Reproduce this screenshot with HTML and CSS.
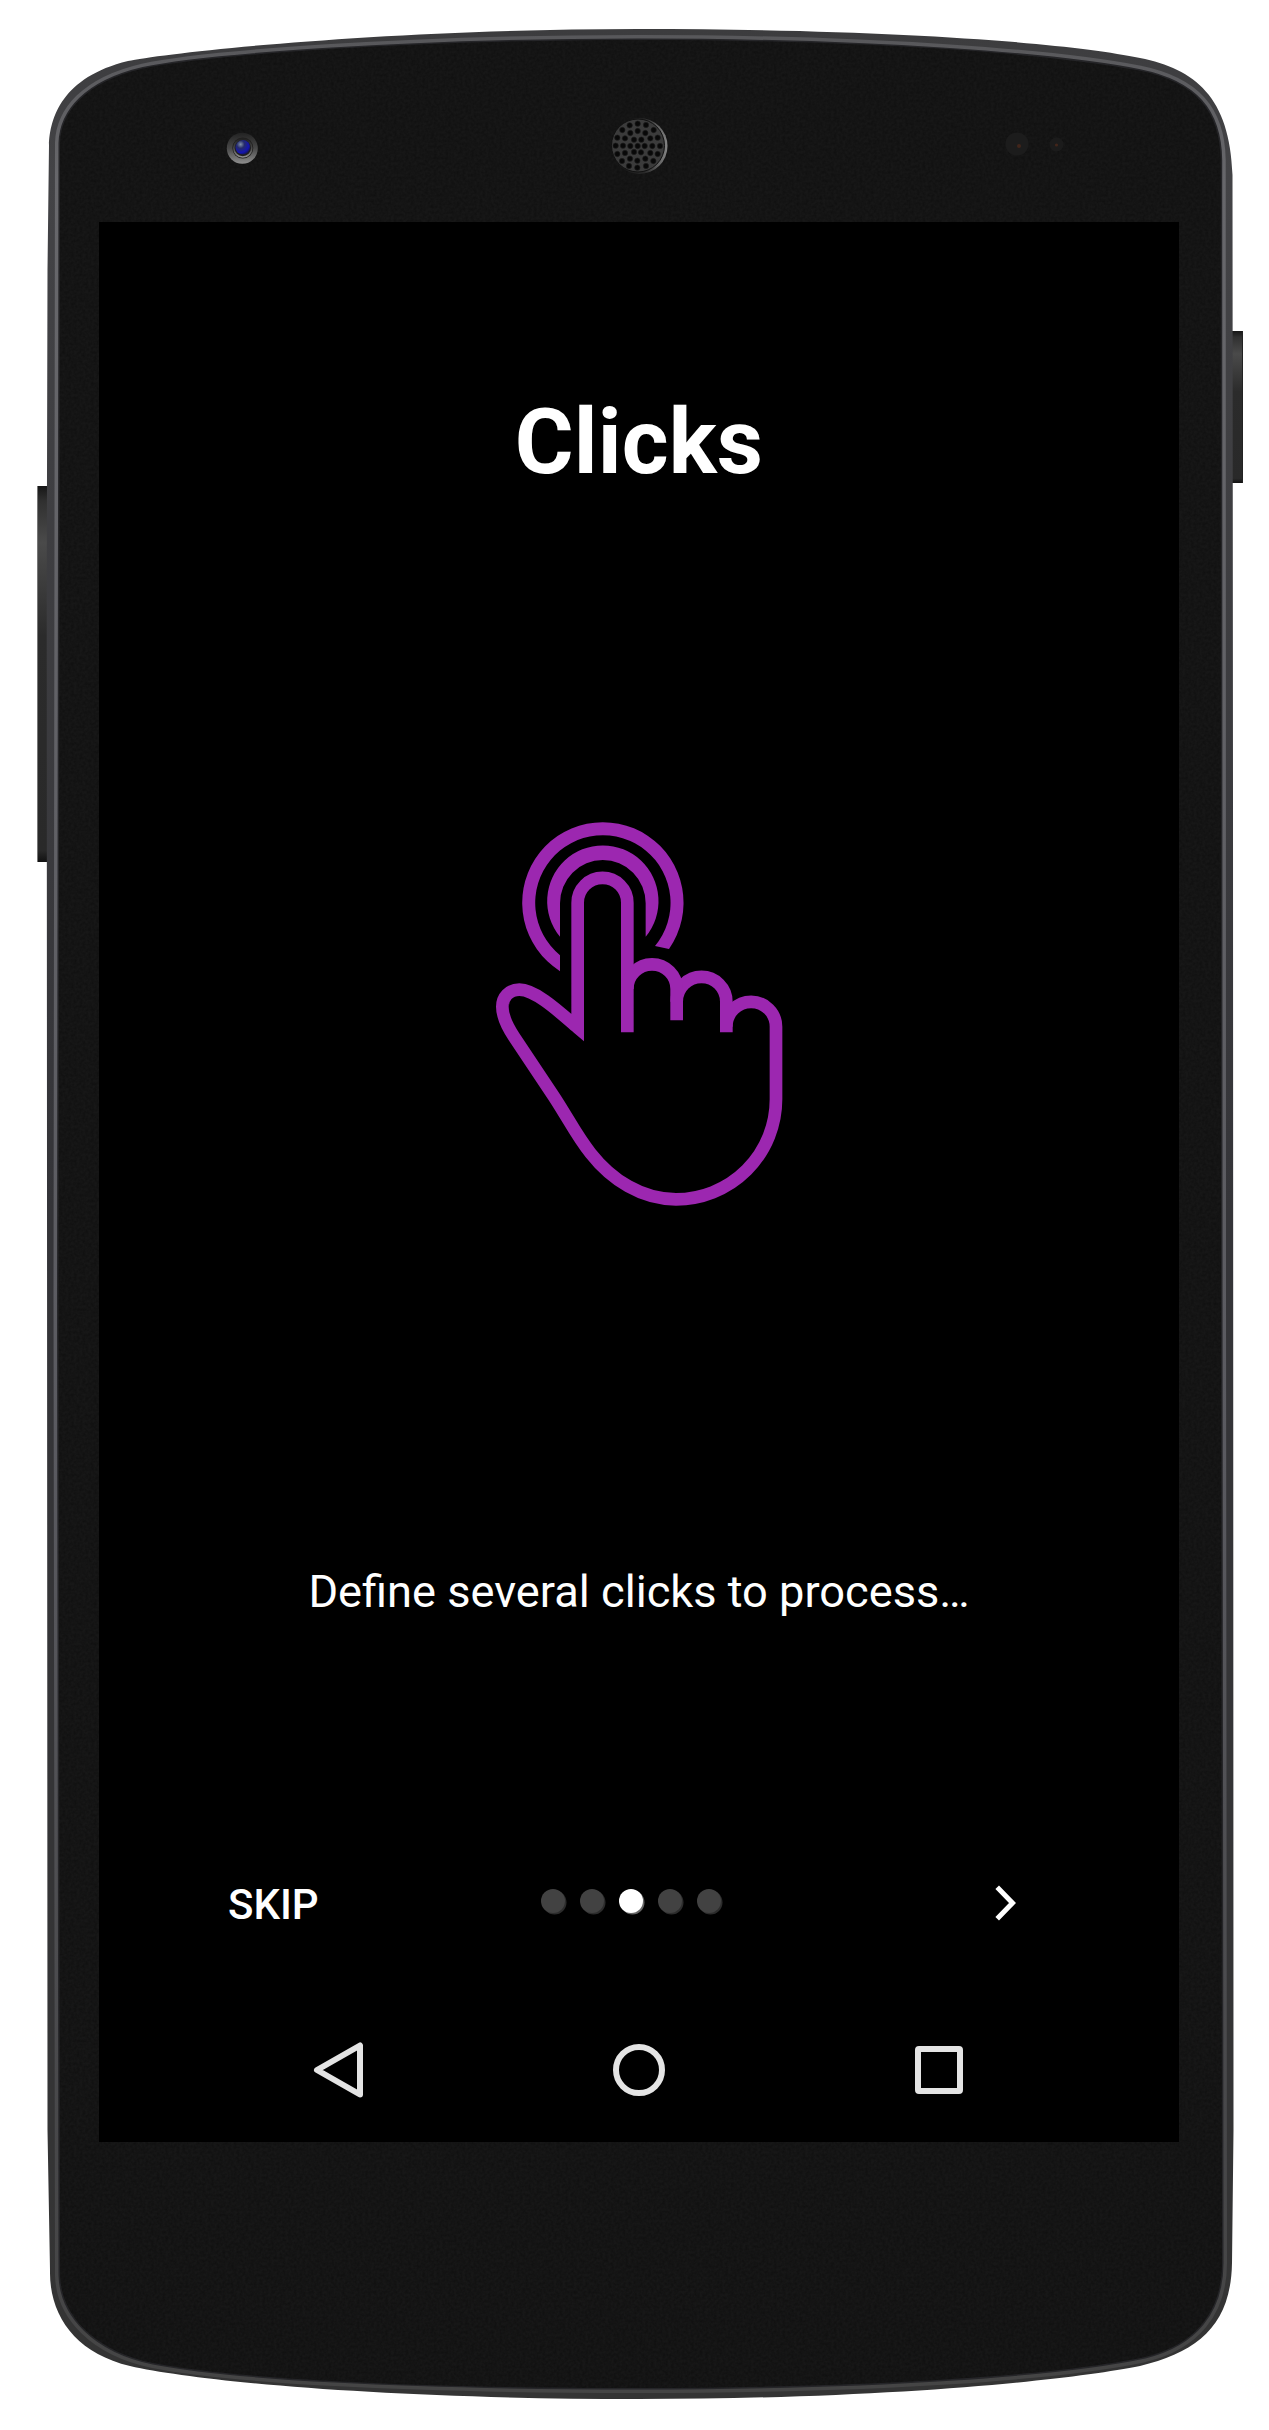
FILE: index.html
```html
<!DOCTYPE html>
<html lang="en">
<head>
<meta charset="utf-8">
<title>Clicks</title>
<link rel="stylesheet" href="styles.css">
</head>
<body>
<div class="phone">
  <svg class="shell" viewBox="0 0 1269 2430" aria-hidden="true">
    <defs>
      <linearGradient id="rim" x1="0" y1="0" x2="0" y2="1">
        <stop offset="0" stop-color="#3c3c3e"/><stop offset=".06" stop-color="#434346"/>
        <stop offset=".5" stop-color="#343438"/><stop offset="1" stop-color="#343434"/>
      </linearGradient>
      <linearGradient id="edge" x1="0" y1="0" x2="0" y2="1">
        <stop offset="0" stop-color="#58585b"/><stop offset=".06" stop-color="#67676b"/>
        <stop offset=".6" stop-color="#5a5a60"/><stop offset=".9" stop-color="#474749"/><stop offset="1" stop-color="#454545"/>
      </linearGradient>
      <linearGradient id="key" x1="0" y1="0" x2="0" y2="1">
        <stop offset="0" stop-color="#161616"/><stop offset=".04" stop-color="#303030"/><stop offset=".15" stop-color="#4a4a4a"/>
        <stop offset=".4" stop-color="#2b2b2b"/><stop offset=".97" stop-color="#292929"/><stop offset="1" stop-color="#111"/>
      </linearGradient>
      <linearGradient id="bezel" x1="0" y1="0" x2="0" y2="1">
        <stop offset="0" stop-color="#222"/><stop offset=".5" stop-color="#484848"/><stop offset="1" stop-color="#8e8e8e"/>
      </linearGradient>
      <linearGradient id="mesh" x1="0" y1="0" x2="1" y2="0">
        <stop offset="0" stop-color="#141414"/><stop offset=".6" stop-color="#2a2a2a"/><stop offset="1" stop-color="#858585"/>
      </linearGradient>
      <radialGradient id="lens" cx=".35" cy=".3" r=".75">
        <stop offset="0" stop-color="#8090a8"/><stop offset=".35" stop-color="#252b6b"/><stop offset=".75" stop-color="#1414b0"/><stop offset="1" stop-color="#15154a"/>
      </radialGradient>
      <filter id="grain" x="0" y="0" width="1" height="1">
        <feTurbulence type="fractalNoise" baseFrequency=".35" numOctaves="2" seed="4"/>
        <feColorMatrix values="0 0 0 0 0  0 0 0 0 0  0 0 0 0 0  .5 0 0 0 -.13"/>
        <feComposite in2="SourceGraphic" operator="in"/>
      </filter>
      <path id="face" d="M60 143C61 112 85 82 143 68.5C200 56 400 40 638 40C880 40 1060 55 1140 70.7C1195 82 1220 110 1220.7 160L1221 1300L1222 2263C1222 2312 1195 2345 1145 2357C1060 2375 880 2388 638 2388C400 2388 230 2378 153 2363C95 2351 61 2316 60 2275L58.5 1300Z"/>
    </defs>
    <rect x="37" y="486" width="13" height="376" fill="url(#key)"/>
    <path d="M37.5 486V862" stroke="#777"/>
    <rect x="1231" y="331" width="12" height="152" fill="url(#key)"/>
    <path d="M1242.5 331V483" stroke="#222"/>
    <path fill="url(#rim)" d="M49 145C50 118 62 77 128 61C165 53 380 29 638 29C890 29 1070 43 1140 58C1195 69 1230 97 1232.5 175L1233 800L1233.5 2130L1232 2263C1231 2325 1198 2352 1140 2366C1070 2380 890 2399 638 2399C390 2399 200 2382 130 2366C75 2353 49 2315 50 2270L47.5 2130L46.7 600L47.5 270Z"/>
    <use href="#face" fill="none" stroke="url(#edge)" stroke-width="10"/>
    <use href="#face" fill="none" stroke="#252528" stroke-width="3"/>
    <use href="#face" fill="#171717"/>
    <use href="#face" filter="url(#grain)"/>

    <circle cx="242.3" cy="148.3" r="15.5" fill="url(#bezel)"/>
    <circle cx="242.8" cy="148" r="10.5" fill="#201f1e"/>
    <circle cx="242.8" cy="148" r="9" fill="none" stroke="url(#bezel)" stroke-width="1.5"/>
    <circle cx="242.8" cy="147.3" r="7.3" fill="url(#lens)"/>

    <circle cx="639.5" cy="146" r="28" fill="url(#mesh)"/>
    <circle cx="638" cy="145.5" r="26.5" fill="#3b3b3b" stroke="#111" stroke-width="1"/>
    <g transform="translate(560 90) scale(.33333)" fill="#080808" stroke="#1c1c1c" stroke-width="2">
      <circle cx="233" cy="168" r="8"/>
      <circle cx="222" cy="149" r="8"/><circle cx="244" cy="149" r="8"/><circle cx="254" cy="168" r="8"/><circle cx="243" cy="187" r="8"/><circle cx="222" cy="186" r="8"/><circle cx="211" cy="168" r="8"/>
      <circle cx="271" cy="145" r="8"/><circle cx="256" cy="129" r="8"/><circle cx="233" cy="123" r="8"/><circle cx="211" cy="129" r="8"/><circle cx="195" cy="145" r="8"/><circle cx="189" cy="167" r="8"/><circle cx="277" cy="168" r="8"/><circle cx="271" cy="189" r="8"/><circle cx="256" cy="206" r="8"/><circle cx="232" cy="212" r="8"/><circle cx="210" cy="206" r="8"/><circle cx="195" cy="189" r="8"/>
      <circle cx="300" cy="168" r="8"/><circle cx="293" cy="192" r="8"/><circle cx="280" cy="213" r="8"/><circle cx="258" cy="228" r="8"/><circle cx="232" cy="233" r="8"/><circle cx="207" cy="228" r="8"/><circle cx="186" cy="213" r="8"/><circle cx="172" cy="192" r="8"/><circle cx="167" cy="167" r="8"/><circle cx="172" cy="143" r="8"/><circle cx="187" cy="120" r="8"/><circle cx="209" cy="106" r="8"/><circle cx="233" cy="101" r="8"/><circle cx="258" cy="105" r="8"/><circle cx="281" cy="120" r="8"/><circle cx="293" cy="143" r="8"/>
    </g>
    <circle cx="1017" cy="144" r="11.5" fill="#1c1c1c"/><circle cx="1019" cy="146" r="2" fill="#42251a"/>
    <circle cx="1056.5" cy="144.5" r="7" fill="#1b1b1b"/><circle cx="1056.5" cy="145" r="1.6" fill="#42251a"/>
  </svg>

  <main class="screen">
    <h1 class="title">Clicks</h1>
    <div class="hero">
      <svg class="tap" viewBox="0 0 1020 1260" aria-hidden="true">
        <g fill="#9c27b0">
          <path d="M270 513.4A242 242 0 1 1 597 447L555 438A203 203 0 1 0 270 465.6Z"/>
          <path d="M270 410A167 167 0 1 1 527 410V310A128.5 130 0 0 0 270 310Z"/>
        </g>
        <g fill="none" stroke="#9c27b0" stroke-width="38" stroke-miterlimit="6">
          <path d="M472 697V308A74.5 74.5 0 0 0 323 308V683C280 647 200 569 148 569C117 569 97 592 97 620C97 648 112 680 132 710L250 887C295 955 318 1005 362 1060C425 1140 515 1198 618 1198A300 300 0 0 0 918 898V680A74.5 74.5 0 0 0 769 680"/>
          <path d="M769 697V605A74.5 74.5 0 0 0 620 605"/>
          <path d="M620 661V567A74 74 0 0 0 472 567"/>
        </g>
      </svg>
    </div>
    <p class="lead">Define several clicks to process…</p>
    <div class="pager">
      <span class="skip">SKIP</span>
      <div class="dots"><i class="dot"></i><i class="dot"></i><i class="dot on"></i><i class="dot"></i><i class="dot"></i></div>
      <svg class="next" viewBox="0 0 24 38" aria-hidden="true"><path d="M3.2 3.2L18.5 19L3.2 34.8" fill="none" stroke="#fff" stroke-width="5"/></svg>
    </div>
    <nav class="nav">
      <svg class="key" viewBox="0 0 60 60"><path d="M51 5.5V54.5L8 30Z"/></svg>
      <svg class="key" viewBox="0 0 60 60"><circle cx="30" cy="30" r="23"/></svg>
      <svg class="key" viewBox="0 0 60 60"><rect x="9" y="9" width="42" height="42" rx="1"/></svg>
    </nav>
  </main>
</div>
</body>
</html>
```
FILE: styles.css
```css
body {
  margin: 0;
  background: #fff;
  font-family: Roboto, "Liberation Sans", sans-serif;
  color: #fff;
}
.phone {
  position: relative;
  box-sizing: border-box;
  width: 1269px;
  height: 2430px;
  padding: 222px 90px 288px 99px;
}
.shell {
  position: absolute;
  inset: 0;
  width: 1269px;
  height: 2430px;
}
.screen {
  position: relative;
  display: flex;
  flex-direction: column;
  box-sizing: border-box;
  width: 1080px;
  height: 1920px;
  padding-top: 168px;
  background: #000;
}
.title {
  margin: 0;
  font-size: 90px;
  line-height: 106px;
  font-weight: 700;
  letter-spacing: .1px;
  text-align: center;
}
.hero {
  display: flex;
  flex: 1;
  padding: 304px 0 0 371px;
}
.tap {
  width: 340px;
  height: 420px;
}
.lead {
  margin: 0 0 235px;
  font-size: 45.2px;
  line-height: 54px;
  text-align: center;
}
.pager {
  display: grid;
  grid-template-columns: 1fr auto 1fr;
  align-items: center;
  height: 96px;
  margin-bottom: 48px;
  padding: 0 135px 0 129px;
}
.skip {
  padding-top: 5px;
  font-size: 42px;
  line-height: 50px;
  font-weight: 500;
}
.dots {
  display: flex;
  gap: 15px;
  margin: 0 10px 2px 0;
}
.dot {
  width: 24px;
  height: 24px;
  border-radius: 50%;
  background: #424242;
  box-shadow: 1.5px 1.5px 0 #2c2c2c;
}
.dot.on {
  background: #fff;
  box-shadow: 1.5px 1.5px 0 #666;
}
.next {
  justify-self: end;
  width: 24px;
  height: 38px;
  margin: 2px 26px 0 0;
}
.nav {
  display: flex;
  justify-content: center;
  align-items: center;
  gap: 240px;
  height: 144px;
}
.key {
  width: 60px;
  height: 60px;
  fill: none;
  stroke: #e4e4e4;
  stroke-width: 6;
  stroke-linejoin: round;
}
```
